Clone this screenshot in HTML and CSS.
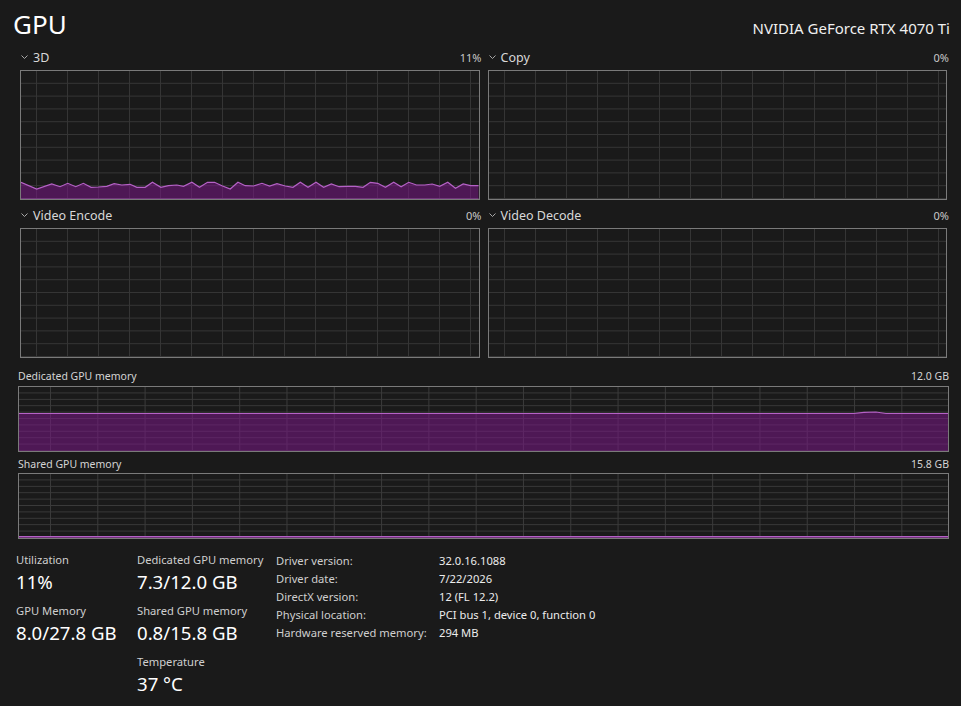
FILE: index.html
```html
<!DOCTYPE html>
<html lang="en">
<head>
<meta charset="utf-8">
<title>GPU</title>
<link rel="stylesheet" href="styles.css">
</head>
<body>
<main class="page">
  <header class="head">
    <h1 class="title">GPU</h1>
    <div class="model">NVIDIA GeForce RTX 4070 Ti</div>
  </header>

  <section class="engines">
    <div class="cell">
      <div class="cell-head">
        <svg class="chev" viewBox="0 0 7 4" width="7" height="4"><polyline points="0.5,0.5 3.5,3.5 6.5,0.5"/></svg>
        <span class="cell-name">3D</span>
        <span class="cell-val">11%</span>
      </div>
      <div class="graph graph-eng">
        <svg class="plot" viewBox="0 0 457 128" preserveAspectRatio="none">
          <polygon class="area" points="0,111.3 15.7,118 30.7,113 39,115.7 46.7,112.3 54.7,115.7 62.3,112.3 70,116.3 77.3,116 85.7,115.3 93,112.7 100.7,114 109,113.3 115.7,116.3 124,116.3 131.3,111.3 139.7,116.3 147.3,114.7 155.7,114 162.3,115.3 170.7,111.3 178.3,116.3 186.3,111.3 193.3,111.3 200.7,114.7 209,118 216.7,111.3 224,114.7 232.3,115 240.7,112.3 248.3,115 255.7,112.7 264,115 271.7,116.3 279,111.3 286.7,116.3 294.7,111.3 302.3,116.3 310,113 317.7,115.7 325.7,115.3 334,115.3 341.7,116.3 349,111.3 356.3,112.3 364,116.3 372.3,111.3 379.7,115.7 387.3,111.3 395,114 403.3,114 410.7,113 418.3,115.3 426.3,111.3 434,117.3 441.7,113 449,114.7 457,114.7 457,128 0,128"/>
          <polyline class="line" points="0,111.3 15.7,118 30.7,113 39,115.7 46.7,112.3 54.7,115.7 62.3,112.3 70,116.3 77.3,116 85.7,115.3 93,112.7 100.7,114 109,113.3 115.7,116.3 124,116.3 131.3,111.3 139.7,116.3 147.3,114.7 155.7,114 162.3,115.3 170.7,111.3 178.3,116.3 186.3,111.3 193.3,111.3 200.7,114.7 209,118 216.7,111.3 224,114.7 232.3,115 240.7,112.3 248.3,115 255.7,112.7 264,115 271.7,116.3 279,111.3 286.7,116.3 294.7,111.3 302.3,116.3 310,113 317.7,115.7 325.7,115.3 334,115.3 341.7,116.3 349,111.3 356.3,112.3 364,116.3 372.3,111.3 379.7,115.7 387.3,111.3 395,114 403.3,114 410.7,113 418.3,115.3 426.3,111.3 434,117.3 441.7,113 449,114.7 457,114.7"/>
          <polyline class="line line-base" points="0,128 457,128"/>
        </svg>
      </div>
    </div>
    <div class="cell">
      <div class="cell-head">
        <svg class="chev" viewBox="0 0 7 4" width="7" height="4"><polyline points="0.5,0.5 3.5,3.5 6.5,0.5"/></svg>
        <span class="cell-name">Copy</span>
        <span class="cell-val">0%</span>
      </div>
      <div class="graph graph-eng"></div>
    </div>
    <div class="cell">
      <div class="cell-head">
        <svg class="chev" viewBox="0 0 7 4" width="7" height="4"><polyline points="0.5,0.5 3.5,3.5 6.5,0.5"/></svg>
        <span class="cell-name">Video Encode</span>
        <span class="cell-val">0%</span>
      </div>
      <div class="graph graph-eng"></div>
    </div>
    <div class="cell">
      <div class="cell-head">
        <svg class="chev" viewBox="0 0 7 4" width="7" height="4"><polyline points="0.5,0.5 3.5,3.5 6.5,0.5"/></svg>
        <span class="cell-name">Video Decode</span>
        <span class="cell-val">0%</span>
      </div>
      <div class="graph graph-eng"></div>
    </div>
  </section>

  <section class="mem">
    <div class="mem-head mem-head-first">
      <span>Dedicated GPU memory</span>
      <span>12.0 GB</span>
    </div>
    <div class="graph graph-mem">
      <svg class="plot" viewBox="0 0 928 64" preserveAspectRatio="none">
        <polygon class="area" points="0,26.5 834,26.5 844,25.3 856,25 866,26.5 928,26.5 928,64 0,64"/>
        <polyline class="line" points="0,26.5 834,26.5 844,25.3 856,25 866,26.5 928,26.5"/>
      </svg>
    </div>
    <div class="mem-head">
      <span>Shared GPU memory</span>
      <span>15.8 GB</span>
    </div>
    <div class="graph graph-mem graph-shared">
      <svg class="plot" viewBox="0 0 928 64" preserveAspectRatio="none">
        <polygon class="area" points="0,62.6 928,62.6 928,64 0,64"/>
        <polyline class="line" points="0,62.6 928,62.6"/>
      </svg>
    </div>
  </section>

  <section class="stats">
    <div class="stat-col stat-col-1">
      <div class="stat">
        <div class="stat-label">Utilization</div>
        <div class="stat-value">11%</div>
      </div>
      <div class="stat">
        <div class="stat-label">GPU Memory</div>
        <div class="stat-value">8.0/27.8 GB</div>
      </div>
    </div>
    <div class="stat-col stat-col-2">
      <div class="stat">
        <div class="stat-label">Dedicated GPU memory</div>
        <div class="stat-value">7.3/12.0 GB</div>
      </div>
      <div class="stat">
        <div class="stat-label">Shared GPU memory</div>
        <div class="stat-value">0.8/15.8 GB</div>
      </div>
      <div class="stat">
        <div class="stat-label">Temperature</div>
        <div class="stat-value">37 °C</div>
      </div>
    </div>
    <dl class="props">
      <dt>Driver version:</dt><dd>32.0.16.1088</dd>
      <dt>Driver date:</dt><dd>7/22/2026</dd>
      <dt>DirectX version:</dt><dd>12 (FL 12.2)</dd>
      <dt>Physical location:</dt><dd>PCI bus 1, device 0, function 0</dd>
      <dt>Hardware reserved memory:</dt><dd>294 MB</dd>
    </dl>
  </section>
</main>
</body>
</html>
```

FILE: styles.css
```css
* { box-sizing: border-box; }

html, body {
  margin: 0;
  padding: 0;
  background: #1a1a1a;
}

body {
  width: 961px;
  height: 706px;
  overflow: hidden;
  font-family: "Noto Sans", "Open Sans", sans-serif;
  color: #e6e6e6;
}

.page {
  display: flex;
  flex-direction: column;
}

/* header */
.head {
  height: 48px;
  display: flex;
  align-items: baseline;
  justify-content: space-between;
  padding: 0 11px 0 13px;
}

.title {
  margin: 0;
  font-size: 26px;
  line-height: 48px;
  font-weight: 400;
  color: #ffffff;
}

.model {
  font-size: 15px;
  color: #f0f0f0;
}

/* engine graphs */
.engines {
  display: grid;
  grid-template-columns: 1fr 1fr;
  column-gap: 8px;
  row-gap: 6px;
  padding: 0 14px 0 20px;
}

.cell-head {
  height: 18px;
  display: flex;
  align-items: center;
  margin-right: -2px;
  margin-bottom: 4px;
}

.chev {
  margin-left: 1px;
  margin-right: 5px;
  fill: none;
  stroke: #a8a8a8;
  stroke-width: 1;
}

.cell-name {
  font-size: 12.5px;
  color: #d8d8d8;
}

.cell-val {
  margin-left: auto;
  font-size: 11px;
  color: #c8c8c8;
}

.graph {
  border: 1px solid #7a7a7a;
  background-color: #1a1a1a;
}

.graph-eng {
  height: 130px;
  background-image:
    linear-gradient(to right, #353535 1px, transparent 1px),
    linear-gradient(to top, #353535 1px, transparent 1px);
  background-size: 31px 100%, 100% 12.8px;
  background-position: 15px 0, 0 0;
}

.plot {
  display: block;
  width: 100%;
  height: 100%;
}

.area {
  fill: rgba(118, 24, 130, 0.58);
  stroke: none;
}

.line {
  fill: none;
  stroke: #b561c6;
  stroke-width: 1.2;
  vector-effect: non-scaling-stroke;
}

.line-base {
  stroke: #8a4c96;
}

/* memory graphs */
.mem {
  display: flex;
  flex-direction: column;
  padding: 0 12px 0 18px;
  margin-top: 10px;
}

.mem-head {
  height: 16px;
  display: flex;
  align-items: center;
  justify-content: space-between;
  font-size: 10.5px;
  color: #d4d4d4;
  margin-top: 4px;
  margin-bottom: 1px;
}

.mem-head-first {
  margin-top: 0;
  margin-bottom: 2px;
}

.graph-mem {
  height: 66px;
  background-image:
    linear-gradient(to right, #3a3a3a 1px, transparent 1px),
    linear-gradient(to top, #3a3a3a 1px, transparent 1px);
  background-size: 47.3px 100%, 100% 6.4px;
  background-position: 31px 0, 0 0;
}

/* stats */
.stats {
  display: flex;
  margin-top: 13px;
  padding-left: 16px;
}

.stat-col-1 { width: 121px; }
.stat-col-2 { width: 139px; }

.stat { margin-bottom: 8px; }

.stat-label {
  font-size: 11.2px;
  line-height: 16px;
  color: #cfcfcf;
}

.stat-value {
  font-size: 18.6px;
  line-height: 27px;
  color: #ffffff;
}

.props {
  margin: 0;
  margin-top: -1px;
  display: grid;
  grid-template-columns: 163px auto;
  grid-auto-rows: 18px;
  align-items: center;
  font-size: 11.2px;
}

.props dt {
  color: #cfcfcf;
}

.props dd {
  margin: 0;
  color: #ececec;
}
```
